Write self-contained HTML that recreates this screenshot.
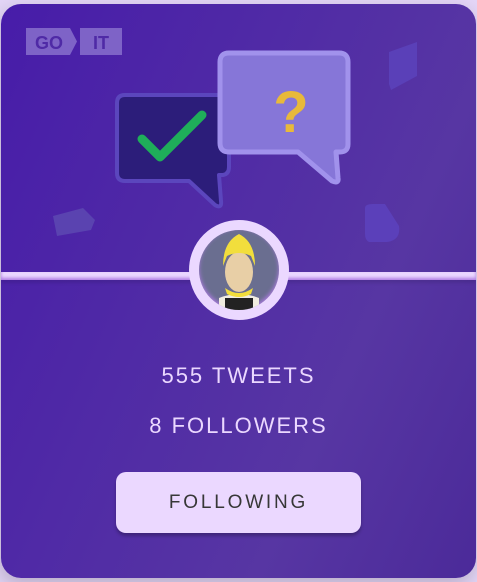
<!DOCTYPE html>
<html><head><meta charset="utf-8"><style>
html,body{margin:0;padding:0;width:477px;height:582px;background:#e4d6f7;overflow:hidden}
.card{position:absolute;left:1px;top:4px;width:475px;height:574px;border-radius:20px;
background:linear-gradient(114deg,#471ca9 0%,#5736a3 70%,#4b2a99 100%);box-shadow:-2px 7px 20px rgba(0,0,0,.2);overflow:hidden;font-family:"Liberation Sans",sans-serif}
.bar{position:absolute;left:0;top:268px;width:475px;height:8px;background:#ebd8ff;box-shadow:0 3px 3px rgba(0,0,0,.1),inset 0 -2px 3px #ae7be3}
.ring{position:absolute;left:188px;top:216px;width:80px;height:80px;border-radius:50%;border:10px solid #ebd8ff;background:#6a6e90;box-shadow:inset 0 -2px 4px #ae7be3;overflow:hidden}
.t{position:absolute;left:0;width:475px;text-align:center;color:#ebd8ff;font-size:22px;letter-spacing:2px}
.btn{position:absolute;left:115px;top:468px;width:245px;height:61px;border-radius:10px;background:#ebd8ff;box-shadow:0 3px 3px rgba(0,0,0,.25);color:#373737;font-size:19px;text-align:center;line-height:61px;letter-spacing:2.8px}
</style></head><body>
<div class="card">
<svg width="475" height="260" style="position:absolute;left:0;top:0">
 <rect x="25" y="24" width="44" height="27" fill="#7e63c7"/>
 <polygon points="69,24 76,37.5 69,51" fill="#7e63c7"/>
 <rect x="79" y="24" width="42" height="27" fill="#7e63c7"/>
 <text x="48" y="45" text-anchor="middle" font-family="Liberation Sans" font-weight="bold" font-size="18" fill="#4f2aa6">GO</text>
 <text x="100" y="45" text-anchor="middle" font-family="Liberation Sans" font-weight="bold" font-size="18" fill="#4f2aa6">IT</text>
 <path d="M124 91 h96 q8 0 8 8 v64 q0 7 -6 8 l-4 0 l2 26 q1 8 -6 4 l-26 -24 h-64 q-8 0 -8 -8 v-70 q0 -8 8 -8 z" fill="#2c1d7a" stroke="#5b46bd" stroke-width="4" stroke-linejoin="round"/>
 <path d="M141 135 l18 18 l42 -42" fill="none" stroke="#1fae5a" stroke-width="9" stroke-linecap="round" stroke-linejoin="round"/>
 <path d="M228 49 h110 q9 0 9 9 v82 q0 8 -8 8 h-4 l2 26 q1 6 -6 3 l-34 -29 h-69 q-9 0 -9 -9 v-81 q0 -9 9 -9 z" fill="#8676d8" stroke="#a192ec" stroke-width="5" stroke-linejoin="round"/>
 <text x="290" y="128" text-anchor="middle" font-family="Liberation Sans" font-weight="bold" font-size="58" fill="#e8b93a">?</text>
 <path d="M388 48 l28 -10 v34 l-26 14 l-2 -6 z" fill="#5a40b8"/>
 <path d="M52 212 l30 -8 l12 12 l-4 10 l-34 6 z" fill="#5a43b0"/>
 <path d="M364 204 q0 -4 8 -4 h12 l14 22 q2 14 -12 16 l-18 0 q-4 -2 -4 -8 z" fill="#5b40ba"/>
</svg>
<div class="bar"></div>
<div class="ring">
 <svg width="80" height="80">
  <path d="M20 80 v-12 q20 -8 40 0 v12 z" fill="#f0ece0"/>
  <path d="M26 80 v-12 h28 v12 z" fill="#222"/>
  <ellipse cx="40" cy="42" rx="14" ry="20" fill="#e8cfa6"/>
  <path d="M24 36 q0 -24 16 -32 q16 8 16 32 l-4 -10 q-12 -6 -24 0 z" fill="#f2de3c"/>
  <path d="M26 58 q14 10 28 0 l-2 6 q-12 6 -24 0 z" fill="#f2de3c"/>
 </svg>
</div>
<div class="t" style="top:359px">555 TWEETS</div>
<div class="t" style="top:409px">8 FOLLOWERS</div>
<div class="btn">FOLLOWING</div>
</div>
</body></html>
